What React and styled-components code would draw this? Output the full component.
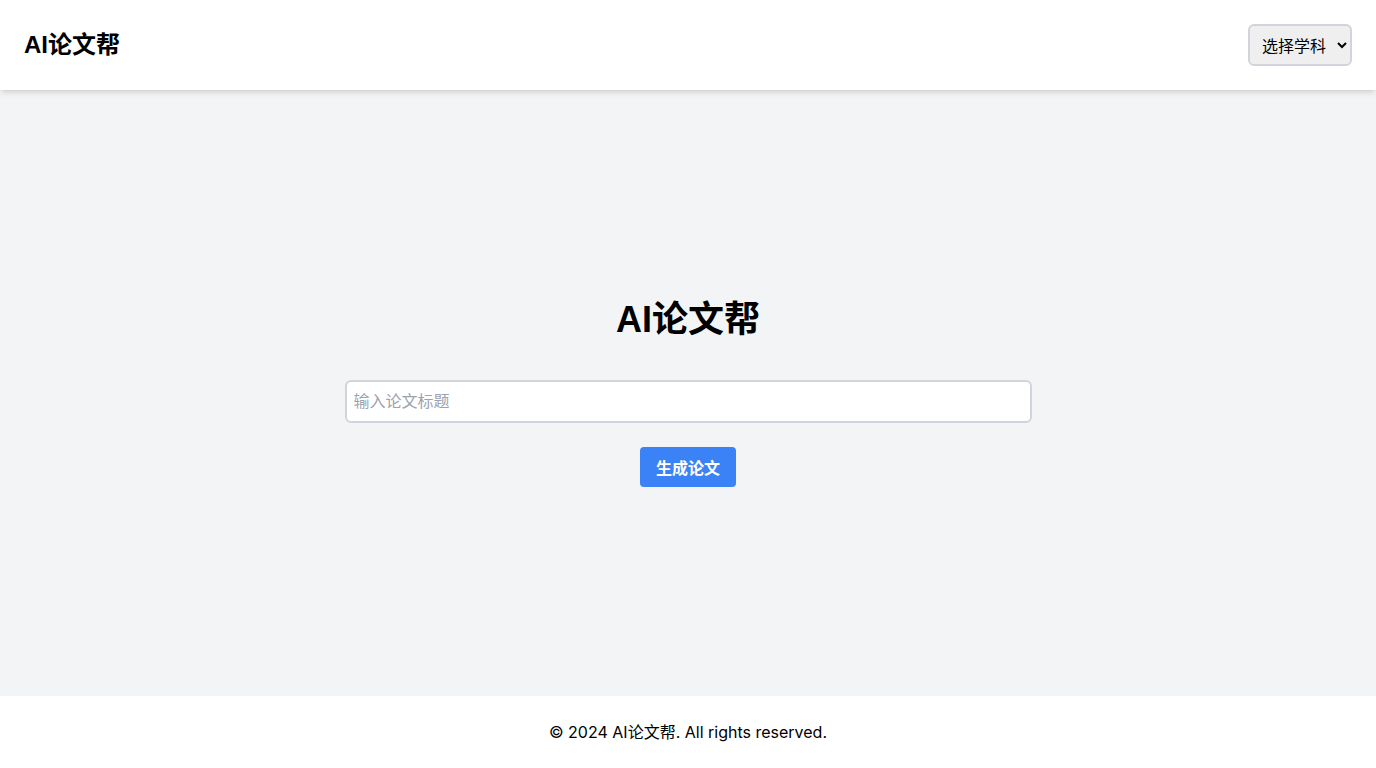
import React from "react";
import styled, { createGlobalStyle } from "styled-components";

const Global = createGlobalStyle`
  *, *::before, *::after { box-sizing: border-box; }
  html, body { margin: 0; padding: 0; }
  body {
    font-family: Inter, "Noto Sans CJK SC", sans-serif;
    color: #000;
    background: #f3f4f6;
  }
`;

const Page = styled.div`
  display: flex;
  flex-direction: column;
  min-height: 768px;
`;

const Header = styled.header`
  background: #fff;
  height: 90px;
  padding: 0 24px;
  display: flex;
  align-items: center;
  justify-content: space-between;
  box-shadow: 0 4px 6px -1px rgba(0,0,0,0.1), 0 2px 4px -2px rgba(0,0,0,0.1);
  position: relative;
  z-index: 1;
`;

const Logo = styled.h1`
  margin: 0;
  font-family: "Liberation Sans", "Noto Sans CJK SC", sans-serif;
  font-size: 24px;
  line-height: 32px;
  font-weight: 700;
`;

const Select = styled.select`
  height: 42px;
  width: 104px;
  padding: 0 4px 0 8px;
  font-family: "Noto Sans CJK SC", sans-serif;
  font-size: 16px;
  color: #000;
  background: #efefef;
  border: 2px solid #d1d5db;
  border-radius: 6px;
`;

const Main = styled.main`
  flex: 1;
  display: flex;
  flex-direction: column;
  align-items: center;
  justify-content: center;
  background: #f3f4f6;
`;

const Title = styled.h2`
  margin: 0 0 40px;
  font-family: "Liberation Sans", "Noto Sans CJK SC", sans-serif;
  font-size: 36px;
  line-height: 40px;
  font-weight: 700;
`;

const Input = styled.input`
  width: 687px;
  height: 43px;
  padding: 0 7px;
  font-family: Inter, "Noto Sans CJK SC", sans-serif;
  font-size: 16px;
  background: #fff;
  border: 2px solid #d1d5db;
  border-radius: 6px;
  outline: none;
  &::placeholder { color: #9ca3af; }
`;

const Button = styled.button`
  margin-top: 24px;
  height: 40px;
  padding: 0 16px;
  font-family: Inter, "Noto Sans CJK SC", sans-serif;
  font-size: 16px;
  font-weight: 700;
  color: #fff;
  background: #3b82f6;
  border: none;
  border-radius: 4px;
  cursor: pointer;
`;

const Footer = styled.footer`
  background: #fff;
  height: 72px;
  display: flex;
  align-items: center;
  justify-content: center;
  font-size: 16px;
  line-height: 24px;
`;

export default function App() {
  return (
    <Page>
      <Global />
      <Header>
        <Logo>AI论文帮</Logo>
        <Select defaultValue="">
          <option value="">选择学科</option>
        </Select>
      </Header>
      <Main>
        <Title>AI论文帮</Title>
        <Input placeholder="输入论文标题" />
        <Button>生成论文</Button>
      </Main>
      <Footer>© 2024 AI论文帮. All rights reserved.</Footer>
    </Page>
  );
}
